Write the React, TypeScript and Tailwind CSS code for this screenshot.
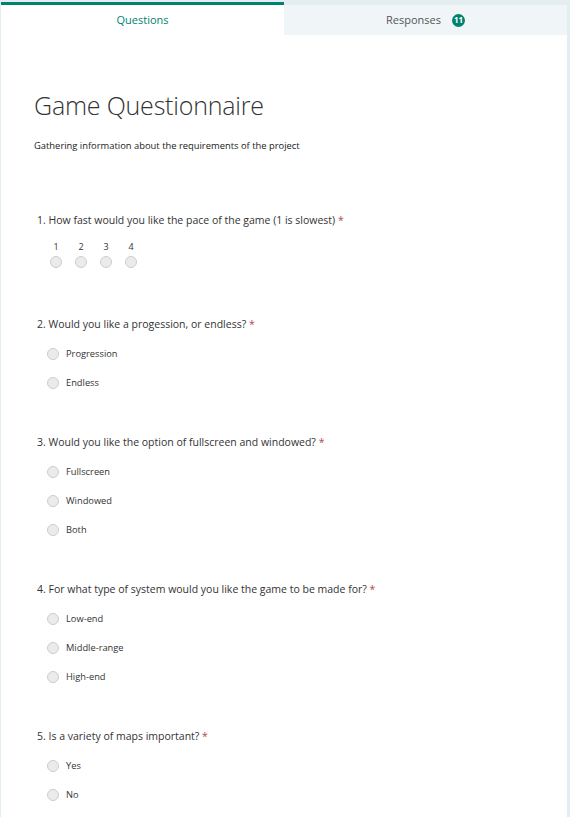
import React from 'react';

type Question = {
    title: string;
    options?: string[];
    scale?: number;
};

const questions: Question[] = [
    { title: 'How fast would you like the pace of the game (1 is slowest)', scale: 4 },
    { title: 'Would you like a progession, or endless?', options: ['Progression', 'Endless'] },
    { title: 'Would you like the option of fullscreen and windowed?', options: ['Fullscreen', 'Windowed', 'Both'] },
    { title: 'For what type of system would you like the game to be made for?', options: ['Low-end', 'Middle-range', 'High-end'] },
    { title: 'Is a variety of maps important?', options: ['Yes', 'No'] },
];

function Radio() {
    return <span className="block w-[12px] h-[12px] rounded-full border border-[#cdcdcd] bg-[#ebebeb]" />;
}

export default function App() {
    return (
        <div className="min-h-[817px] bg-[#e4eef0] pt-[2px] pr-[3px] pl-px font-['Open_Sans',sans-serif] text-[#333]">
            {/* Tabs */}
            <div className="flex h-[33px]">
                <div className="w-[283px] border-t-[3px] border-[#008272] bg-white flex items-center justify-center text-[11px] text-[#008272]">
                    Questions
                </div>
                <div className="flex-1 mt-[3px] bg-[#f0f6f8] flex items-center justify-center gap-[11px] text-[11px] text-[#555]">
                    <span>Responses</span>
                    <span className="w-[13px] h-[13px] rounded-full bg-[#008272] text-white text-[8px] font-bold flex items-center justify-center">11</span>
                </div>
            </div>

            {/* Form body */}
            <div className="bg-white min-h-[782px] pl-[33px] pt-[53px] pb-[10px]">
                <h1 className="text-[25px] font-light leading-[34px] text-[#333] tracking-[-0.2px]">Game Questionnaire</h1>
                <p className="mt-[17px] text-[9.4px] leading-[14px] text-[#222]">
                    Gathering information about the requirements of the project
                </p>

                <div className="mt-[59px] flex flex-col gap-[43px]">
                    {questions.map((q, i) => (
                        <div key={i} className="pl-[3px]">
                            <div className="text-[10.5px] leading-[16px] text-[#333]">
                                {i + 1}. {q.title} <span className="text-[#b4474c]">*</span>
                            </div>
                            {q.scale ? (
                                <div className="mt-[13px] mb-[5px] ml-[13px] flex gap-[13px]">
                                    {Array.from({ length: q.scale }).map((_, n) => (
                                        <div key={n} className="flex flex-col items-center gap-[3px]">
                                            <span className="text-[9px] leading-[12px] text-[#333]">{n + 1}</span>
                                            <Radio />
                                        </div>
                                    ))}
                                </div>
                            ) : (
                                <div className="mt-[14px] ml-[10px] flex flex-col gap-[13px]">
                                    {q.options!.map((o) => (
                                        <div key={o} className="flex items-center gap-[7px] h-[16px]">
                                            <Radio />
                                            <span className="text-[9.3px] text-[#333]">{o}</span>
                                        </div>
                                    ))}
                                </div>
                            )}
                        </div>
                    ))}
                </div>
            </div>
        </div>
    );
}
